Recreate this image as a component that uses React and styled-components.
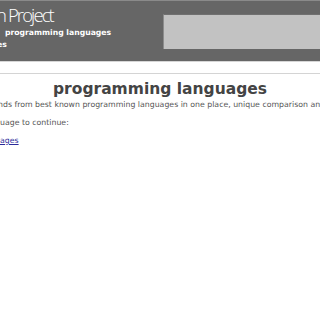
import React from 'react'
import styled, { createGlobalStyle } from 'styled-components'

const Global = createGlobalStyle`
	html, body {
		margin: 0;
		padding: 0;
		background: #fff;
		overflow: hidden;
	}
	body {
		font-family: 'DejaVu Sans', Verdana, sans-serif;
	}
`

const Header = styled.div`
	height: 60px;
	background-color: #666;
	border-top: 1px solid #8a8a8a;
	border-bottom: 1px solid #d6d6d6;
	display: flex;
	align-items: flex-start;
	justify-content: space-between;
	color: #fff;
`

const Brand = styled.div`
	padding-top: 2px;
	margin-left: -4px;
	display: flex;
	flex-direction: column;
	white-space: nowrap;
`

const Title = styled.div`
	font-family: 'Open Sans', 'Liberation Sans', sans-serif;
	font-weight: 300;
	font-size: 18.5px;
	letter-spacing: -1.9px;
	line-height: 24px;
`

const Tagline = styled.div`
	font-size: 7.7px;
	font-weight: bold;
	line-height: 12px;
	padding-left: ${(p) => p.$indent || 0}px;
`

const SearchBox = styled.div`
	margin-top: 13px;
	width: 156px;
	height: 34px;
	background-color: #c2c2c2;
	border-left: 1px solid #8c8c8c;
	border-top: 1px solid #707070;
`

const Divider = styled.div`
	height: 1px;
	margin-top: 11px;
	background-color: #d4d4d4;
`

const Main = styled.div`
	color: #444;
	white-space: nowrap;
	overflow: hidden;
`

const Heading = styled.h1`
	margin: 5px 0 0;
	text-align: center;
	font-size: 15.5px;
	line-height: 20px;
	font-weight: bold;
	color: #444;
`

const Para = styled.p`
	margin: ${(p) => p.$top}px 0 0;
	margin-left: ${(p) => p.$shift || 0}px;
	font-size: 7.8px;
	line-height: 12px;
	color: #555;
`

const Link = styled.a`
	color: #2a2a9a;
	text-decoration: underline;
`

export default function App() {
	return (
		<>
			<Global />
			<Header>
				<Brand>
					<Title>n Project</Title>
					<Tagline $indent={9}>programming languages</Tagline>
					<Tagline $indent={1}>es</Tagline>
				</Brand>
				<SearchBox />
			</Header>
			<Divider />
			<Main>
				<Heading>programming languages</Heading>
				<Para $top={0} $shift={-2}>
					nds from best known programming languages in one place, unique comparison and
				</Para>
				<Para $top={6}>uage to continue:</Para>
				<Para $top={6}>
					<Link href="#">ages</Link>
				</Para>
			</Main>
		</>
	)
}
